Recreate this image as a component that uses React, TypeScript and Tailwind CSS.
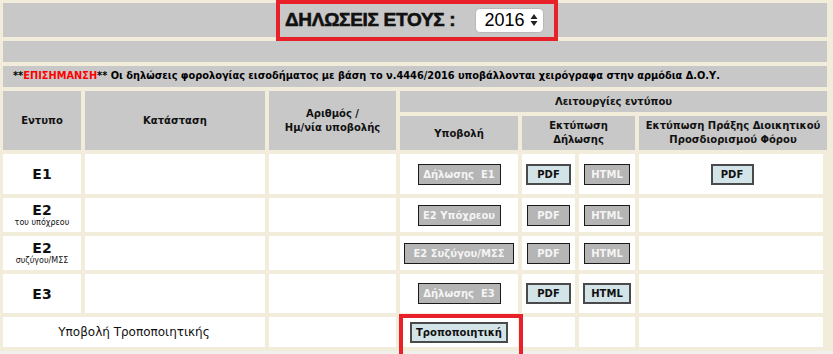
import React from "react";

const cell = "bg-[#c8c8c8]";
const font = { fontFamily: '"DejaVu Sans", Verdana, sans-serif' };

const OffBtn: React.FC<{ label: string; className?: string }> = ({ label, className }) => (
  <div
    className={`h-[21px] border border-[#1a1a1a] bg-[#b5b5b5] flex items-center justify-center text-[10px] font-bold text-[#f4f4f4] ${className ?? ""}`}
  >
    {label}
  </div>
);

const OnBtn: React.FC<{ label: string; className?: string }> = ({ label, className }) => (
  <div
    className={`h-[21px] border-2 border-[#4a4a4a] bg-[#d3e4e9] flex items-center justify-center text-[10px] font-bold text-[#111] ${className ?? ""}`}
  >
    {label}
  </div>
);

const Form: React.FC<{ code: string; sub?: string }> = ({ code, sub }) => (
  <div className="bg-white flex flex-col items-center justify-center leading-none text-[#111]">
    <span className="text-[14px] font-bold">{code}</span>
    {sub && <span className="text-[8px] mt-[2px]">{sub}</span>}
  </div>
);

export default function App() {
  return (
    <div className="w-[833px] h-[354px] bg-[#eef1ec] overflow-hidden" style={font}>
      <div className="bg-[#f2eddb] pt-[3px] pl-[3px] pb-[4px]">
        {/* Header table */}
        <div className="grid grid-cols-[78px_180px_127px_118px_53px_56px_188px] grid-rows-[34px_21px_21px_21px_34px] gap-[4px]">
          <div className={`${cell} col-span-7 relative flex items-center`}>
            <div className="absolute left-[273px] top-[-3px] w-[282px] h-[41px] border-4 border-[#e8202a]" />
            <div
              className="flex items-center ml-[282px]"
              style={{ fontFamily: '"Liberation Sans", Arial, sans-serif' }}
            >
              <span className="text-[19px] font-bold text-[#111] tracking-[-0.3px] [-webkit-text-stroke:0.6px_#111]">
                ΔΗΛΩΣΕΙΣ ΕΤΟΥΣ :
              </span>
              <div className="ml-[20px] w-[69px] h-[25px] bg-white border border-[#b9b9b9] rounded-[5px] flex items-center pl-[8px] pr-[5px]">
                <span className="text-[18px] text-black leading-none">2016</span>
                <svg className="ml-auto shrink-0" width="8" height="14" viewBox="0 0 8 14">
                  <path d="M4 1 L7.5 6 L0.5 6 Z" fill="#222" />
                  <path d="M4 13 L7.5 8 L0.5 8 Z" fill="#222" />
                </svg>
              </div>
            </div>
          </div>
          <div className={`${cell} col-span-7`} />
          <div className={`${cell} col-span-7 flex items-center pl-[10px] text-[9.8px] font-bold text-black whitespace-nowrap`}>
            **<span className="text-[#ff0000]">ΕΠΙΣΗΜΑΝΣΗ</span>** Οι δηλώσεις φορολογίας εισοδήματος με βάση το
            ν.4446/2016 υποβάλλονται χειρόγραφα στην αρμόδια Δ.Ο.Υ.
          </div>

          <div className={`${cell} row-span-2 flex items-center justify-center text-[10px] font-bold text-[#111]`}>Εντυπο</div>
          <div className={`${cell} row-span-2 flex items-center justify-center text-[10px] font-bold text-[#111]`}>Κατάσταση</div>
          <div className={`${cell} row-span-2 flex items-center justify-center text-center text-[10px] font-bold text-[#111] leading-[14px]`}>
            Αριθμός /<br />Ημ/νία υποβολής
          </div>
          <div className={`${cell} col-span-4 flex items-center justify-center text-[10px] font-bold text-[#111]`}>Λειτουργίες εντύπου</div>
          <div className={`${cell} flex items-center justify-center text-[10px] font-bold text-[#111]`}>Υποβολή</div>
          <div className={`${cell} col-span-2 flex items-center justify-center text-center text-[10px] font-bold text-[#111] leading-[14px]`}>
            Εκτύπωση<br />Δήλωσης
          </div>
          <div className={`${cell} flex items-center justify-center text-center text-[10px] font-bold text-[#111] leading-[14px]`}>
            Εκτύπωση Πράξης Διοικητικού<br />Προσδιορισμού Φόρου
          </div>
        </div>

        {/* Data rows */}
        <div className="mt-[4px] grid grid-cols-[78px_180px_127px_118px_53px_56px_184px] grid-rows-[40px_34px_34px_39px_30px] gap-[4px]">
          <Form code="E1" />
          <div className="bg-white" />
          <div className="bg-white" />
          <div className="bg-white flex items-center justify-center"><OffBtn label="Δήλωσης  E1" className="w-[83px] whitespace-pre" /></div>
          <div className="bg-white flex items-center justify-center"><OnBtn label="PDF" className="w-[45px]" /></div>
          <div className="bg-white flex items-center justify-center"><OffBtn label="HTML" className="w-[46px]" /></div>
          <div className="bg-white flex items-center justify-center"><OnBtn label="PDF" className="w-[43px] ml-[2px]" /></div>

          <Form code="E2" sub="του υπόχρεου" />
          <div className="bg-white" />
          <div className="bg-white" />
          <div className="bg-white flex items-center justify-center"><OffBtn label="E2 Υπόχρεου" className="w-[83px]" /></div>
          <div className="bg-white flex items-center justify-center"><OffBtn label="PDF" className="w-[43px]" /></div>
          <div className="bg-white flex items-center justify-center"><OffBtn label="HTML" className="w-[46px]" /></div>
          <div className="bg-white" />

          <Form code="E2" sub="συζύγου/ΜΣΣ" />
          <div className="bg-white" />
          <div className="bg-white" />
          <div className="bg-white flex items-center justify-center"><OffBtn label="E2 Συζύγου/ΜΣΣ" className="w-[110px]" /></div>
          <div className="bg-white flex items-center justify-center"><OffBtn label="PDF" className="w-[43px]" /></div>
          <div className="bg-white flex items-center justify-center"><OffBtn label="HTML" className="w-[46px]" /></div>
          <div className="bg-white" />

          <Form code="E3" />
          <div className="bg-white" />
          <div className="bg-white" />
          <div className="bg-white flex items-center justify-center"><OffBtn label="Δήλωσης  E3" className="w-[83px] whitespace-pre" /></div>
          <div className="bg-white flex items-center justify-center"><OnBtn label="PDF" className="w-[45px]" /></div>
          <div className="bg-white flex items-center justify-center"><OnBtn label="HTML" className="w-[48px]" /></div>
          <div className="bg-white" />

          <div className="bg-white col-span-2 flex items-center justify-center text-[12px] text-[#111]">Υποβολή Τροποποιητικής</div>
          <div className="bg-white" />
          <div className="bg-white relative flex items-center justify-center">
            <div className="absolute left-[-1px] top-[-3px] w-[124px] h-[44px] border-4 border-[#e8202a]" />
            <OnBtn label="Τροποποιητική" className="w-[98px]" />
          </div>
          <div className="bg-white" />
          <div className="bg-white" />
          <div className="bg-white" />
        </div>
      </div>
    </div>
  );
}
